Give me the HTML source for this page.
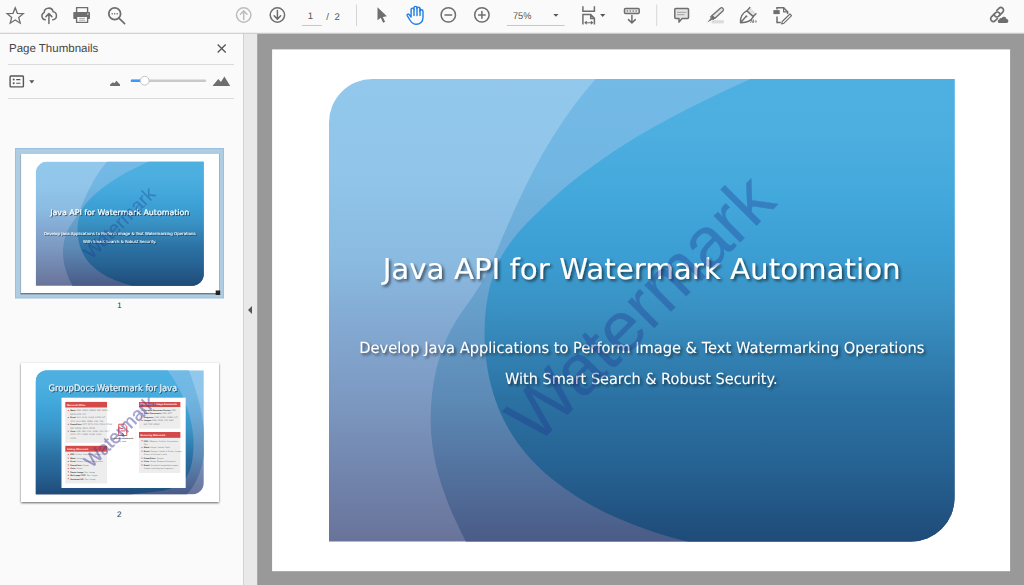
<!DOCTYPE html>
<html lang="en"><head><meta charset="utf-8"><title>Java API for Watermark Automation</title>
<style>
html,body{margin:0;padding:0;background:#999;}
body{width:1024px;height:585px;overflow:hidden;position:relative;font-family:"Liberation Sans", "DejaVu Sans", sans-serif;}
svg{position:absolute;left:0;top:0;display:block}
text{white-space:pre;text-rendering:geometricPrecision}
</style></head><body>
<svg width="1024" height="585" viewBox="0 0 1024 585">
<defs><linearGradient id="gL" x1="0" y1="0" x2="0" y2="462.5" gradientUnits="userSpaceOnUse"><stop offset="0" stop-color="#92C8EB"/><stop offset="0.19" stop-color="#91C6EA"/><stop offset="0.4" stop-color="#8ABAE0"/><stop offset="0.49" stop-color="#85AED6"/><stop offset="0.69" stop-color="#7C99C2"/><stop offset="1" stop-color="#69739A"/></linearGradient><linearGradient id="gM" x1="0" y1="0" x2="0" y2="462.5" gradientUnits="userSpaceOnUse"><stop offset="0" stop-color="#74BAE6"/><stop offset="0.19" stop-color="#72B7E3"/><stop offset="0.4" stop-color="#6BA8D5"/><stop offset="0.49" stop-color="#679FCB"/><stop offset="0.69" stop-color="#5D8AB6"/><stop offset="1" stop-color="#4A5B87"/></linearGradient><linearGradient id="gD" x1="0" y1="0" x2="0" y2="462.5" gradientUnits="userSpaceOnUse"><stop offset="0" stop-color="#4EAFE1"/><stop offset="0.12" stop-color="#4DAEE0"/><stop offset="0.25" stop-color="#43A8DB"/><stop offset="0.37" stop-color="#3C9FD4"/><stop offset="0.49" stop-color="#3A92C4"/><stop offset="0.69" stop-color="#2B72A3"/><stop offset="0.83" stop-color="#266394"/><stop offset="1" stop-color="#1F4B78"/></linearGradient><clipPath id="cpS"><path d="M43.5 0H625.5V419A43.5 43.5 0 0 1 582 462.5H0V43.5A43.5 43.5 0 0 1 43.5 0Z"/></clipPath><g id="bgA"><rect x="-1" y="-1" width="627.5" height="464.5" fill="url(#gL)"/><path d="M280.9 -14.9C278.5 -12.4 271.1 -4.9 266.5 0.2C261.9 5.4 257.5 10.7 253.2 16.0C248.9 21.4 244.8 26.8 240.8 32.4C236.8 37.9 233.0 43.5 229.3 49.2C225.5 54.9 222.0 60.7 218.5 66.6C215.0 72.4 211.7 78.3 208.4 84.3C205.2 90.3 202.0 96.3 199.0 102.4C195.9 108.5 192.9 114.6 190.1 120.8C187.2 126.9 184.4 133.1 181.6 139.4C178.9 145.6 176.2 151.9 173.6 158.1C170.9 164.4 168.4 170.8 165.7 177.0C163.0 183.2 160.3 189.4 157.2 195.4C154.0 201.4 150.5 207.3 146.8 213.0C143.2 218.7 138.9 224.1 135.1 229.8C131.3 235.4 127.3 241.0 124.0 246.9C120.6 252.8 117.7 258.9 115.2 265.2C112.6 271.5 110.6 277.9 108.8 284.5C107.0 291.1 105.6 297.8 104.5 304.5C103.4 311.3 102.6 318.2 102.2 325.0C101.7 331.8 101.5 338.7 101.7 345.6C101.9 352.4 102.4 359.2 103.3 366.0C104.2 372.7 105.4 379.4 106.9 386.0C108.5 392.6 110.3 399.2 112.4 405.6C114.5 412.1 116.9 418.5 119.4 424.9C121.9 431.2 124.7 437.5 127.6 443.7C130.4 449.8 133.5 456.0 136.6 462.0C139.8 468.0 144.7 476.9 146.3 479.9L635.5 492.5 L635.5 -30.0 L280.9 -30.0 Z" fill="url(#gM)"/><path d="M447.4 -11.2C443.1 -9.3 430.2 -3.7 421.6 0.1C413.0 4.0 404.4 7.8 395.9 11.8C387.4 15.8 378.9 19.8 370.5 24.0C362.0 28.1 353.7 32.4 345.4 36.7C337.1 41.1 328.8 45.6 320.7 50.3C312.6 54.9 304.5 59.7 296.6 64.7C288.7 69.7 280.9 74.8 273.2 80.2C265.5 85.5 258.0 91.1 250.6 96.8C243.2 102.6 235.9 108.6 228.8 114.8C221.8 121.0 214.8 127.5 208.1 134.1C201.3 140.7 194.3 147.4 188.4 154.6C182.4 161.8 176.8 169.3 172.4 177.4C168.1 185.5 164.8 194.3 162.2 203.1C159.6 212.0 157.9 221.4 156.8 230.7C155.7 240.0 155.4 249.6 155.6 259.1C155.8 268.5 156.6 278.1 158.1 287.4C159.6 296.7 161.7 306.0 164.4 314.9C167.2 323.8 170.7 332.6 174.8 340.9C178.9 349.3 183.8 357.3 189.2 364.8C194.7 372.3 200.9 379.4 207.6 386.0C214.2 392.7 221.5 398.8 229.0 404.6C236.4 410.3 244.4 415.6 252.4 420.5C260.5 425.4 268.8 429.8 277.2 433.9C285.6 438.0 294.2 441.7 302.9 445.1C311.6 448.5 320.5 451.6 329.4 454.5C338.3 457.3 347.4 459.9 356.5 462.3C365.6 464.7 379.5 467.9 384.0 469.0L635.5 492.5 L635.5 -30.0 L447.4 -30.0 Z" fill="url(#gD)"/></g><g id="bgB"><rect x="-1" y="-1" width="627.5" height="464.5" fill="url(#gL)"/><path d="M564.1 -16.2C565.3 -12.9 569.0 -3.2 571.4 3.4C573.8 10.1 576.2 16.8 578.6 23.7C581.0 30.5 583.4 37.5 585.7 44.5C588.1 51.5 590.4 58.7 592.6 65.9C594.9 73.0 597.1 80.3 599.3 87.6C601.4 95.0 603.5 102.4 605.5 109.8C607.4 117.2 609.4 124.7 611.2 132.3C613.0 139.8 614.7 147.4 616.2 155.0C617.8 162.6 619.3 170.2 620.6 177.9C621.9 185.5 623.1 193.2 624.2 200.8C625.2 208.5 626.1 216.2 626.8 223.8C627.5 231.5 628.1 239.2 628.4 246.8C628.8 254.4 629.0 262.1 628.9 269.7C628.9 277.2 628.7 284.8 628.2 292.3C627.7 299.9 627.1 307.4 626.1 314.8C625.2 322.2 624.1 329.6 622.7 336.9C621.3 344.2 619.6 351.5 617.7 358.7C615.7 365.8 613.5 372.9 611.1 379.9C608.6 387.0 605.8 393.9 602.7 400.7C599.6 407.6 596.2 414.3 592.5 420.9C588.8 427.5 584.8 434.1 580.4 440.5C576.0 446.8 571.3 453.1 566.2 459.3C561.2 465.4 552.6 474.3 549.9 477.3L-10.0 502.5 L-10.0 -40.0 L564.1 -40.0 Z" fill="url(#gM)"/><path d="M476.0 -18.9C479.0 -15.1 488.0 -3.8 493.7 4.1C499.3 11.9 504.9 20.1 510.2 28.4C515.5 36.7 520.6 45.2 525.5 53.9C530.4 62.6 535.0 71.5 539.4 80.5C543.8 89.6 548.0 98.8 551.9 108.1C555.8 117.4 559.4 126.9 562.7 136.5C566.0 146.0 569.0 155.7 571.7 165.5C574.4 175.3 576.8 185.1 578.8 195.1C580.9 205.0 582.6 215.0 583.9 225.0C585.2 235.0 586.2 245.1 586.8 255.2C587.3 265.3 587.5 275.5 587.3 285.6C587.1 295.7 586.5 305.8 585.4 315.9C584.3 326.0 582.9 336.2 580.8 346.0C578.7 355.8 576.2 365.6 572.7 374.6C569.2 383.6 565.1 392.3 559.9 399.9C554.6 407.5 548.4 414.4 541.3 420.3C534.2 426.2 526.0 431.1 517.1 435.1C508.3 439.2 498.4 442.1 488.4 444.6C478.3 447.2 467.5 448.8 456.9 450.3C446.3 451.9 435.2 452.8 424.6 453.9C414.0 455.0 403.3 455.7 393.5 456.9C383.6 458.1 374.0 459.2 365.5 461.1C357.0 462.9 346.3 466.8 342.5 468.0L-10.0 502.5 L-10.0 -40.0 L476.0 -40.0 Z" fill="url(#gD)"/></g></defs><defs>
<filter id="ts" x="-5%" y="-30%" width="110%" height="170%"><feGaussianBlur in="SourceAlpha" stdDeviation="1.500" result="b"/><feOffset in="b" dx="1.600" dy="1.900" result="o"/><feComponentTransfer in="o" result="sh"><feFuncA type="linear" slope="0.600"/></feComponentTransfer><feMerge><feMergeNode in="sh"/><feMergeNode in="SourceGraphic"/></feMerge></filter>
<filter id="tsT" x="-5%" y="-30%" width="110%" height="170%"><feGaussianBlur in="SourceAlpha" stdDeviation="1.6" result="b"/><feOffset in="b" dx="2.2" dy="2.8" result="o"/><feComponentTransfer in="o" result="sh"><feFuncA type="linear" slope="0.52"/></feComponentTransfer><feMerge><feMergeNode in="sh"/><feMergeNode in="SourceGraphic"/></feMerge></filter>
<filter id="pshadow" x="-5%" y="-5%" width="110%" height="112%"><feGaussianBlur in="SourceAlpha" stdDeviation="1" result="b"/><feOffset in="b" dx="0" dy="1.100" result="o"/><feComponentTransfer in="o" result="sh"><feFuncA type="linear" slope="0.600"/></feComponentTransfer><feMerge><feMergeNode in="sh"/><feMergeNode in="SourceGraphic"/></feMerge></filter>
</defs>
<rect x="257.200" y="33" width="767" height="552" fill="#999999"/><rect x="272.100" y="49.400" width="738" height="521.800" fill="#fff"/><g transform="translate(329 79)"><g clip-path="url(#cpS)"><use href="#bgA"/></g><g filter="url(#ts)" fill="#fff" stroke="#fff" stroke-width="0" text-anchor="middle" font-family='"DejaVu Sans", "Liberation Sans", sans-serif'><text x="312.7" y="200" font-size="28.8" stroke-width="0" textLength="518" lengthAdjust="spacingAndGlyphs">Java API for Watermark Automation</text><text x="312.8" y="274.1" font-size="15.3" stroke-width="0" textLength="565" lengthAdjust="spacingAndGlyphs">Develop Java Applications to Perform Image &amp; Text Watermarking Operations</text><text x="312.3" y="304.5" font-size="15.3" stroke-width="0" textLength="272.5" lengthAdjust="spacingAndGlyphs">With Smart Search &amp; Robust Security.</text></g><g clip-path="url(#cpS)"><text transform="translate(207.3 367) rotate(-45)" font-family='"Liberation Sans", "DejaVu Sans", sans-serif' font-size="70.5" fill="#1E2F8C" stroke="#1E2F8C" stroke-width="0.3" opacity="0.32">Watermark</text></g></g><rect x="0" y="0" width="1024" height="33" fill="#FAFAFA"/><rect x="0" y="32.700" width="1024" height="1.100" fill="#D4D4D4"/><rect x="0" y="33.800" width="243" height="552" fill="#FAFAFA"/><rect x="243" y="33.800" width="1" height="552" fill="#D2D2D2"/><rect x="244" y="33.800" width="13.200" height="552" fill="#E9E9E9"/><path d="M248 310l4-4v8z" fill="#555"/><text x="9" y="52.200" font-size="11.500" fill="#464646" font-family='"Liberation Sans", "DejaVu Sans", sans-serif'>Page Thumbnails</text><rect x="8" y="64" width="226" height="1" fill="#DADADA"/><rect x="8" y="98" width="226" height="1" fill="#DADADA"/><rect x="15.5" y="148.5" width="208" height="149.5" fill="#AECDE3" stroke="#9BBFE0" stroke-width="1"/><rect x="21" y="154" width="198" height="139" fill="#fff"/><rect x="20.300" y="154.500" width="0.800" height="139.500" fill="#6C7C88" fill-opacity="0.450"/><rect x="20.500" y="293" width="198.500" height="1.400" fill="#6C7C88"/><rect x="219" y="154" width="0.900" height="139" fill="#8DB6DC"/><rect x="215.700" y="290.500" width="4.500" height="4.500" fill="#222"/><g transform="translate(35.7 161.5) scale(0.2687)"><g clip-path="url(#cpS)"><use href="#bgA"/></g><g filter="url(#tsT)" fill="#fff" stroke="#fff" stroke-width="0" text-anchor="middle" font-family='"DejaVu Sans", "Liberation Sans", sans-serif'><text x="312.7" y="200.4" font-size="28.8" stroke-width="0.4" textLength="518" lengthAdjust="spacingAndGlyphs">Java API for Watermark Automation</text><text x="312.8" y="272.6" font-size="15.3" stroke-width="0.1" textLength="565" lengthAdjust="spacingAndGlyphs">Develop Java Applications to Perform Image &amp; Text Watermarking Operations</text><text x="312.3" y="303" font-size="15.3" stroke-width="0.1" textLength="272.5" lengthAdjust="spacingAndGlyphs">With Smart Search &amp; Robust Security.</text></g><g clip-path="url(#cpS)"><text transform="translate(207.3 367) rotate(-45)" font-family='"Liberation Sans", "DejaVu Sans", sans-serif' font-size="70.5" fill="#1E2F8C" stroke="#1E2F8C" stroke-width="0.3" opacity="0.32">Watermark</text></g></g><text x="119.500" y="308" font-size="8" fill="#333" text-anchor="middle" font-family='"Liberation Sans", "DejaVu Sans", sans-serif'>1</text><rect x="21" y="363" width="198" height="139" fill="#fff" filter="url(#pshadow)"/><g transform="translate(35.7 370.2) scale(0.2687)"><g clip-path="url(#cpS)"><use href="#bgB"/></g></g><g transform="translate(35.7 370.2) scale(0.2687)" font-family='"Liberation Sans", "DejaVu Sans", sans-serif'><g clip-path="url(#cpS)"><rect x="96" y="102.300" width="462.200" height="336" fill="#fff"/><rect x="110.2" y="118" width="155.5" height="21.6" fill="#D24A4A"/><rect x="110.2" y="139.6" width="155.5" height="130.6" fill="#EDEDED"/><text x="116.2" y="132.6" font-size="9" font-weight="bold" fill="#fff">Microsoft Office</text><rect x="119.2" y="148.6" width="4.500" height="3" fill="#D24A4A"/><text x="128.2" y="153.1" font-size="7.700" fill="#777"><tspan font-weight="bold" fill="#333">Word:</tspan> DOC, DOCX, DOCM, DOT, DOTX,</text><text x="128.2" y="165.9" font-size="7.700" fill="#777">DOTM, RTF, TXT</text><rect x="119.2" y="174.2" width="4.500" height="3" fill="#D24A4A"/><text x="128.2" y="178.7" font-size="7.700" fill="#777"><tspan font-weight="bold" fill="#333">Excel:</tspan> XLS, XLSX, XLSM, XLTM, XLT,</text><text x="128.2" y="191.5" font-size="7.700" fill="#777">XLTX, CSV, ODS, FODS, SXC, TSV</text><rect x="119.2" y="199.8" width="4.500" height="3" fill="#D24A4A"/><text x="128.2" y="204.3" font-size="7.700" fill="#777"><tspan font-weight="bold" fill="#333">PowerPoint:</tspan> PPT, PPTX, PPS, PPSX, PPSM,</text><text x="128.2" y="217.1" font-size="7.700" fill="#777">POT, POTM, POTX, PPTM</text><rect x="119.2" y="225.4" width="4.500" height="3" fill="#D24A4A"/><text x="128.2" y="229.9" font-size="7.700" fill="#777"><tspan font-weight="bold" fill="#333">Visio:</tspan> VSD, VDX, VSX, VSDX, VSS, VST,</text><text x="128.2" y="242.7" font-size="7.700" fill="#777">VSTX, VTX, VSDM, VSSM, VSSX,</text><text x="128.2" y="255.5" font-size="7.700" fill="#777">VSTM</text><rect x="110.2" y="281.4" width="155.5" height="22.3" fill="#D24A4A"/><rect x="110.2" y="303.7" width="155.5" height="118" fill="#EDEDED"/><text x="116.2" y="296.7" font-size="9" font-weight="bold" fill="#fff">Adding Watermark</text><rect x="119.2" y="312.7" width="4.500" height="3" fill="#D24A4A"/><text x="128.2" y="317.2" font-size="7.700" fill="#777"><tspan font-weight="bold" fill="#333">PDF:</tspan> Artifact, Annotation, XObject</text><rect x="119.2" y="325.5" width="4.500" height="3" fill="#D24A4A"/><text x="128.2" y="330" font-size="7.700" fill="#777"><tspan font-weight="bold" fill="#333">Word:</tspan> Shape</text><rect x="119.2" y="338.3" width="4.500" height="3" fill="#D24A4A"/><text x="128.2" y="342.8" font-size="7.700" fill="#777"><tspan font-weight="bold" fill="#333">Excel:</tspan> Shape, Picture, Background</text><rect x="119.2" y="351.1" width="4.500" height="3" fill="#D24A4A"/><text x="128.2" y="355.6" font-size="7.700" fill="#777"><tspan font-weight="bold" fill="#333">PowerPoint:</tspan> Shape</text><rect x="119.2" y="363.9" width="4.500" height="3" fill="#D24A4A"/><text x="128.2" y="368.4" font-size="7.700" fill="#777"><tspan font-weight="bold" fill="#333">Visio:</tspan> Shape</text><rect x="119.2" y="376.7" width="4.500" height="3" fill="#D24A4A"/><text x="128.2" y="381.2" font-size="7.700" fill="#777"><tspan font-weight="bold" fill="#333">Raster Image:</tspan> Text, Image</text><rect x="119.2" y="389.5" width="4.500" height="3" fill="#D24A4A"/><text x="128.2" y="394" font-size="7.700" fill="#777"><tspan font-weight="bold" fill="#333">Multi-page TIFF:</tspan> Text, Image</text><rect x="119.2" y="402.3" width="4.500" height="3" fill="#D24A4A"/><text x="128.2" y="406.8" font-size="7.700" fill="#777"><tspan font-weight="bold" fill="#333">Animated GIF:</tspan> Text, Image</text><rect x="384.4" y="118.4" width="154.1" height="19.6" fill="#D24A4A"/><rect x="384.4" y="138" width="154.1" height="79.7" fill="#EDEDED"/><text x="390.4" y="131" font-size="9" font-weight="bold" fill="#fff">PDF, Email &amp; Image Documents</text><rect x="393.4" y="147" width="4.500" height="3" fill="#D24A4A"/><text x="402.4" y="151.5" font-size="7.700" fill="#777"><tspan font-weight="bold" fill="#333">Portable Document Format:</tspan> PDF</text><rect x="393.4" y="159.9" width="4.500" height="3" fill="#D24A4A"/><text x="402.4" y="164.4" font-size="7.700" fill="#777"><tspan font-weight="bold" fill="#333">Email Documents:</tspan> EML, OFT</text><rect x="393.4" y="172.8" width="4.500" height="3" fill="#D24A4A"/><text x="402.4" y="177.3" font-size="7.700" fill="#777"><tspan font-weight="bold" fill="#333">Diagrams:</tspan> VSD, VSDX, VSDM, VST</text><rect x="393.4" y="185.7" width="4.500" height="3" fill="#D24A4A"/><text x="402.4" y="190.2" font-size="7.700" fill="#777"><tspan font-weight="bold" fill="#333">Images:</tspan> PNG, JPEG, JP2, BMP,</text><text x="402.4" y="203.1" font-size="7.700" fill="#777">GIF, TIFF, WEBP</text><rect x="384.4" y="230" width="154.1" height="22" fill="#D24A4A"/><rect x="384.4" y="252" width="154.1" height="130.6" fill="#EDEDED"/><text x="390.4" y="245" font-size="9" font-weight="bold" fill="#fff">Removing Watermark</text><rect x="393.4" y="261" width="4.500" height="3" fill="#D24A4A"/><text x="402.4" y="265.5" font-size="7.700" fill="#777"><tspan font-weight="bold" fill="#333">PDF:</tspan> XObjects, Artifacts, Annotations,</text><text x="402.4" y="278.4" font-size="7.700" fill="#777">Text</text><rect x="393.4" y="286.8" width="4.500" height="3" fill="#D24A4A"/><text x="402.4" y="291.3" font-size="7.700" fill="#777"><tspan font-weight="bold" fill="#333">Word:</tspan> Shape, Header, Field</text><rect x="393.4" y="299.7" width="4.500" height="3" fill="#D24A4A"/><text x="402.4" y="304.2" font-size="7.700" fill="#777"><tspan font-weight="bold" fill="#333">Excel:</tspan> Shapes, Header &amp; Footer, Images</text><text x="402.4" y="317.1" font-size="7.700" fill="#777">Charts &amp; Attribute in cells</text><rect x="393.4" y="325.5" width="4.500" height="3" fill="#D24A4A"/><text x="402.4" y="330" font-size="7.700" fill="#777"><tspan font-weight="bold" fill="#333">PowerPoint:</tspan> Shapes</text><rect x="393.4" y="338.4" width="4.500" height="3" fill="#D24A4A"/><text x="402.4" y="342.9" font-size="7.700" fill="#777"><tspan font-weight="bold" fill="#333">Visio:</tspan> Shape, Diagram Comments</text><rect x="393.4" y="351.3" width="4.500" height="3" fill="#D24A4A"/><text x="402.4" y="355.8" font-size="7.700" fill="#777"><tspan font-weight="bold" fill="#333">Email:</tspan> Attached &amp; embedded images,</text><text x="402.4" y="368.7" font-size="7.700" fill="#777">Subject and body text fragments</text><circle cx="323" cy="237" r="51" fill="#fff" stroke="#EDEDED" stroke-width="1.500"/><g fill="none" stroke="#D7363B" stroke-width="3.200"><path d="M309 201h22l8 8v34h-30z"/><path d="M315 226h18M315 217h10M320 233l8 6-8 4"/></g><text x="323" y="256" font-size="7.500" font-weight="bold" fill="#444" text-anchor="middle">GroupDocs.Watermark</text><text x="323" y="266" font-size="7.500" fill="#666" text-anchor="middle">for Java</text><text transform="translate(209 366) rotate(-45)" font-size="70" fill="#45449E" stroke="#45449E" stroke-width="1.400" opacity="0.500">Watermark</text></g><text x="48" y="76.500" font-size="34" fill="#F2F2F2" stroke="#F2F2F2" stroke-width="0.300" font-family='"DejaVu Sans", "Liberation Sans", sans-serif' filter="url(#tsT)" textLength="478" lengthAdjust="spacingAndGlyphs">GroupDocs.Watermark for Java</text></g><text x="119.200" y="517" font-size="8" fill="#333" text-anchor="middle" font-family='"Liberation Sans", "DejaVu Sans", sans-serif'>2</text><g id="toolbar-icons" fill="none" stroke="#6E6E6E" stroke-width="1.5" stroke-linecap="round" stroke-linejoin="round"><path d="M15.20 7.80L17.37 13.31L23.28 13.67L18.72 17.44L20.20 23.18L15.20 20.00L10.20 23.18L11.68 17.44L7.12 13.67L13.03 13.31Z" fill="none" stroke="#6E6E6E" stroke-width="1.3" stroke-linejoin="miter"/><path d="M45.300 19.700a3.700 3.700 0 0 1-1.100-7.100 4.500 4.500 0 0 1 8.900-0.900 3.700 3.700 0 0 1 3.300 4 3.500 3.500 0 0 1-3.700 4"/><path d="M48.9 23.4v-9.3M45.9 16.6l3-3 3 3"/><rect x="76.6" y="7.6" width="11" height="5" stroke-width="1.4"/><rect x="73.300" y="12" width="16.700" height="7" rx="0.8" fill="#6E6E6E" stroke="none"/><rect x="76.6" y="16.2" width="11" height="6.2" fill="#fff" stroke-width="1.4"/><path d="M79.5 18.3h5.2M79.5 20.2h5.2" stroke-width="0.9" stroke="#999"/><rect x="87.2" y="13.4" width="1.3" height="1.3" fill="#ddd" stroke="none"/><circle cx="114.700" cy="13.700" r="5.900" stroke-width="1.800"/><path d="M119.2 18.4l5.4 5.3" stroke-width="1.7"/><path d="M111.6 13.8h1.2M114.1 13.8h1.2M116.6 13.8h1.2" stroke-width="1.500" stroke-linecap="butt"/><g stroke="#BDBDBD"><circle cx="243.7" cy="15" r="7.2"/><path d="M243.7 19.4v-8M240.4 14.2l3.3-3.3 3.3 3.3"/></g><circle cx="277.4" cy="15" r="7.2"/><path d="M277.4 10.6v8M274.1 15.8l3.3 3.3 3.3-3.3"/><path d="M377.5 7.3v13l3.3-2.6 2.3 5 2-0.9-2.3-4.9 4.1-0.6z" fill="#6E6E6E" stroke="none"/><g stroke="#1F7FE0" stroke-width="1.400"><path d="M411.100 17V9.600a1.450 1.450 0 0 1 2.900 0V7.900a1.500 1.500 0 0 1 3 0V8.600a1.500 1.500 0 0 1 3 0V11.300a1.500 1.500 0 0 1 3 0V17.500c0 4.200-3 6.800-6.600 6.800-3 0-4.800-1.400-6.200-3.800l-3-4.900c-0.600-1.100 0.800-2.100 1.800-1.200l2.100 2.600z"/><path d="M414 9.600V15.500M417 7.900V15.500M420 8.600V15.500"/></g><circle cx="448.3" cy="14.9" r="7.2"/><path d="M445 14.900h6.600"/><circle cx="481.9" cy="14.9" r="7.2"/><path d="M478.600 14.900h6.600M481.900 11.600v6.600"/><path d="M582.900 6.200v5.100h11.500v-5.100M582.900 24.500v-10h7.800l3.700 3.900v6.100M590.700 14.500v3.900h3.700" stroke-linecap="butt" stroke-linejoin="miter"/><path d="M585 22.700h7.600M586.400 21.500l-1.400 1.200 1.400 1.200M591.200 21.500l1.400 1.200-1.400 1.200" stroke-width="1.100"/><rect x="624.500" y="8.500" width="14.700" height="5" rx="1" fill="#E2E2E2"/><path d="M627.300 10.200v1.600M630.200 10.200v1.600M633.200 10.200v1.600M636.100 10.200v1.600" stroke-width="1" stroke-linecap="butt"/><path d="M631.900 15.400v7.300M628.500 19.600l3.400 3.300 3.400-3.300"/><path d="M675.700 8.500h11.900a0.900 0.900 0 0 1 0.900 0.900v8.200a0.900 0.900 0 0 1-0.900 0.900h-5.500l-3.100 3.600v-3.600h-3.300a0.900 0.900 0 0 1-0.900-0.900v-8.200a0.900 0.900 0 0 1 0.900-0.900z" fill="#E4E4E4"/><path d="M677.400 12.300h8.600M677.400 14.700h6.800" stroke-width="0.900" stroke="#9A9A9A"/><rect x="711.700" y="20.200" width="12.100" height="3.200" fill="#DCDCDC" stroke="none"/><path d="M712.130 15.590L720.330 8.190A1.900 1.900 0 0 1 722.870 11.010L714.670 18.410Z" fill="#E6E6E6" stroke-width="1.300"/><path d="M712.130 15.590L714.670 18.410L713.040 19.880L710.500 17.060Z" fill="#6E6E6E" stroke-width="0.800"/><path d="M712.400 19.500L710.900 17.800L707.300 22.600Z" fill="#6E6E6E" stroke="none"/><path d="M746.800 10.900L749.900 7.500L755.700 12.700L753.300 16.600Z" fill="#E2E2E2" stroke="none"/><path d="M740.500 22.700C740.200 17.600 741.300 13.600 746.800 10.900L753.300 16.600C750.700 21.800 746.300 22.800 740.500 22.700ZM746.800 10.900L749.900 7.500M753.300 16.600L756 13.800M740.900 22.300L745.800 16.800" stroke-width="1.400"/><circle cx="746.300" cy="16.300" r="0.700" fill="#6E6E6E" stroke-width="0.500"/><path d="M750.600 22.500l1.200-2.600 0.800 2.600M753.500 19.800v2.600M755 21.200q1-1 1.600 0-1.600 0.400-0.800 1.200" stroke-width="0.800"/><path d="M777 9.400v-1.600h6.600l4 4v2.300M777 16.500v5.900h3.800" stroke-linecap="butt" stroke-linejoin="miter"/><path d="M783.600 7.800v4h4" stroke-width="1.200"/><rect x="773.400" y="10.100" width="6.300" height="4" fill="#6E6E6E" stroke="none"/><path d="M782.300 21.500l7.600-7.500 1.700 1.700-7.600 7.500-2.400 0.700z" stroke-width="1.100" fill="#fff"/><g transform="translate(997.100 14.500) rotate(-45)" stroke-width="1.700"><path d="M-2.600 3.050H-5.650A2.700 2.700 0 0 1 -5.650 -2.350H0A2.700 2.700 0 0 1 1.910 2.260"/><path d="M2.600 -3.050H5.650A2.700 2.700 0 0 1 5.650 2.350H0A2.700 2.700 0 0 1 -1.910 -2.260"/></g><path d="M999.700 23h6.600a2 2 0 0 0 0.200-4 2.500 2.500 0 0 0-4.700-0.900 1.800 1.800 0 0 0-2.500 1.500 1.700 1.700 0 0 0 0.400 3.400z" fill="#6E6E6E" stroke="none"/></g><rect x="356" y="4.500" width="1" height="21.500" fill="#D6D6D6"/><rect x="656.200" y="4.500" width="1" height="21.500" fill="#D6D6D6"/><rect x="301.800" y="25" width="20" height="1" fill="#C8C8C8"/><rect x="506.800" y="25" width="57.800" height="1" fill="#C8C8C8"/><g font-family='"Liberation Sans", "DejaVu Sans", sans-serif' font-size="9.600" fill="#555"><text x="310.300" y="19.100" text-anchor="middle">1</text><text x="326.200" y="19.700">/</text><text x="334.500" y="19.700">2</text><text x="513" y="18.900" textLength="18.400" lengthAdjust="spacingAndGlyphs">75%</text></g><path d="M553.300 13.900h5.200l-2.600 2.900z" fill="#555"/><path d="M600.100 14.100h5.200l-2.600 2.800z" fill="#555"/><path d="M217.700 44.500l8 8M225.700 44.500l-8 8" stroke="#555" stroke-width="1.300" fill="none"/><rect x="10.100" y="76" width="13.300" height="10.900" rx="0.800" fill="none" stroke="#555" stroke-width="1.400"/><circle cx="13.700" cy="79.600" r="1" fill="#555"/><circle cx="13.700" cy="83.300" r="1" fill="#555"/><path d="M16.200 79.600h4.200M16.200 83.300h4.200" stroke="#555" stroke-width="1.100"/><path d="M29.200 80.200h5.200l-2.600 3.300z" fill="#555"/><path d="M110.100 85.900v-1.400l2.800-2.300 1.500 1 2-2.500 3.600 3.800v1.400z" fill="#6E6E6E"/><path d="M212.500 85.900l5.800-7 2.600 3.100 3.500-5.500 5.800 9.400z" fill="#6E6E6E"/><rect x="130.700" y="79.500" width="75.500" height="2.500" rx="1.200" fill="#C9C9C9"/><rect x="130.700" y="79.500" width="13" height="2.500" rx="1.200" fill="#3D99F5"/><circle cx="144.700" cy="80.700" r="4.400" fill="#fff" stroke="#BDBDBD" stroke-width="0.900"/></svg>
</body></html>
